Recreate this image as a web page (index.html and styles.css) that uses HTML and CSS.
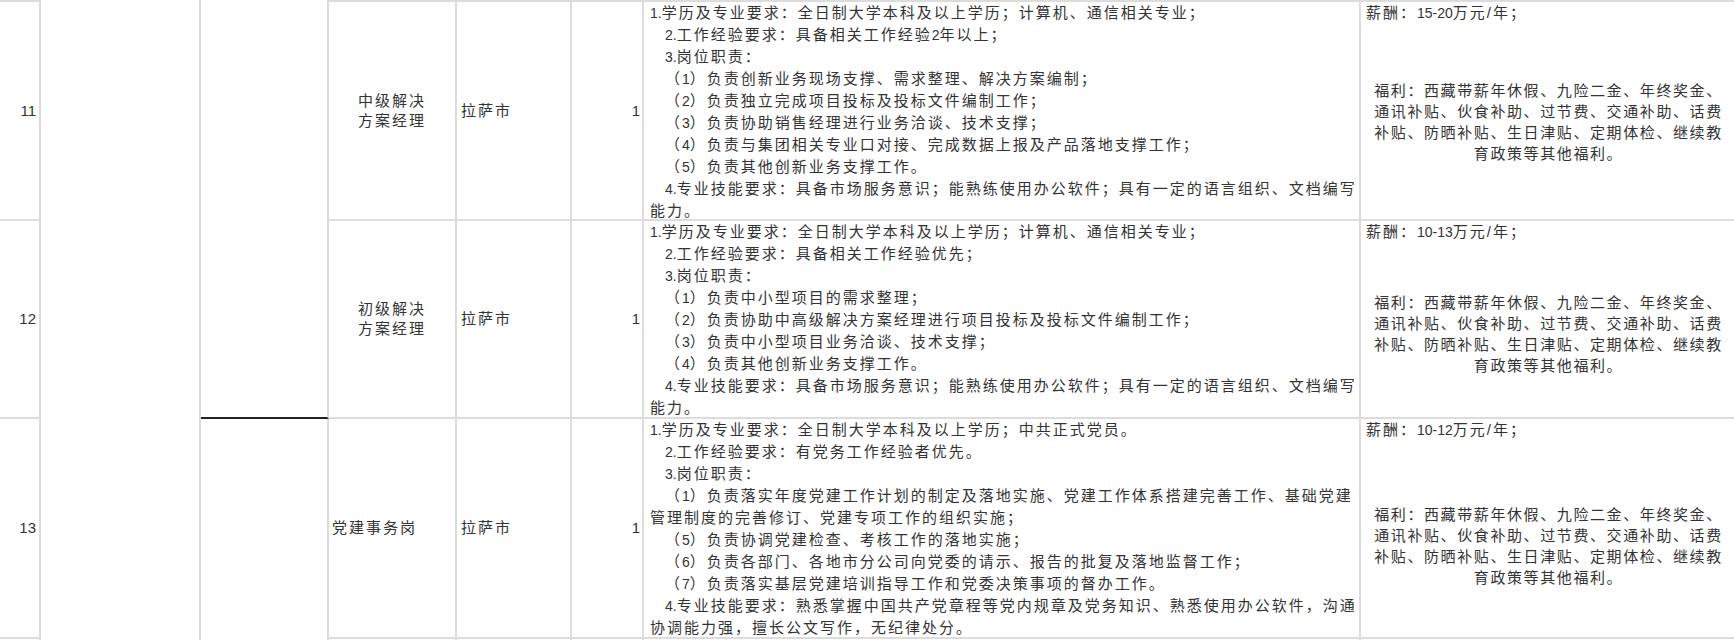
FILE: index.html
```html
<!DOCTYPE html>
<html lang="zh-CN">
<head>
<meta charset="utf-8">
<title>岗位表</title>
<link rel="stylesheet" href="styles.css">
</head>
<body>
<div class="sheet">
  <!-- row 11 -->
  <div class="cell num top">11</div>
  <div class="cell merge-all"></div>
  <div class="cell merge-dept"></div>
  <div class="cell pos top">中级解决<br>方案经理</div>
  <div class="cell city top">拉萨市</div>
  <div class="cell count top">1</div>
  <div class="cell desc top">
    <div class="ln"><span class="d">1.</span>学历及专业要求：全日制大学本科及以上学历；计算机、通信相关专业；</div>
    <div class="ln in"><span class="d">2.</span>工作经验要求：具备相关工作经验<span class="d">2</span>年以上；</div>
    <div class="ln in"><span class="d">3.</span>岗位职责：</div>
    <div class="ln in">（<span class="d">1</span>）负责创新业务现场支撑、需求整理、解决方案编制；</div>
    <div class="ln in">（<span class="d">2</span>）负责独立完成项目投标及投标文件编制工作；</div>
    <div class="ln in">（<span class="d">3</span>）负责协助销售经理进行业务洽谈、技术支撑；</div>
    <div class="ln in">（<span class="d">4</span>）负责与集团相关专业口对接、完成数据上报及产品落地支撑工作；</div>
    <div class="ln in">（<span class="d">5</span>）负责其他创新业务支撑工作。</div>
    <div class="ln in"><span class="d">4.</span>专业技能要求：具备市场服务意识；能熟练使用办公软件；具有一定的语言组织、文档编写</div>
    <div class="ln">能力。</div>
  </div>
  <div class="cell pay top">
    <div class="salary">薪酬：<span class="d">15-20</span>万元/年；</div>
    <div class="welfare w11">福利：西藏带薪年休假、九险二金、年终奖金、<br>通讯补贴、伙食补助、过节费、交通补助、话费<br>补贴、防晒补贴、生日津贴、定期体检、继续教<br>育政策等其他福利。</div>
  </div>

  <!-- row 12 -->
  <div class="cell num">12</div>
  <div class="cell pos">初级解决<br>方案经理</div>
  <div class="cell city">拉萨市</div>
  <div class="cell count">1</div>
  <div class="cell desc">
    <div class="ln"><span class="d">1.</span>学历及专业要求：全日制大学本科及以上学历；计算机、通信相关专业；</div>
    <div class="ln in"><span class="d">2.</span>工作经验要求：具备相关工作经验优先；</div>
    <div class="ln in"><span class="d">3.</span>岗位职责：</div>
    <div class="ln in">（<span class="d">1</span>）负责中小型项目的需求整理；</div>
    <div class="ln in">（<span class="d">2</span>）负责协助中高级解决方案经理进行项目投标及投标文件编制工作；</div>
    <div class="ln in">（<span class="d">3</span>）负责中小型项目业务洽谈、技术支撑；</div>
    <div class="ln in">（<span class="d">4</span>）负责其他创新业务支撑工作。</div>
    <div class="ln in"><span class="d">4.</span>专业技能要求：具备市场服务意识；能熟练使用办公软件；具有一定的语言组织、文档编写</div>
    <div class="ln">能力。</div>
  </div>
  <div class="cell pay">
    <div class="salary">薪酬：<span class="d">10-13</span>万元/年；</div>
    <div class="welfare w12">福利：西藏带薪年休假、九险二金、年终奖金、<br>通讯补贴、伙食补助、过节费、交通补助、话费<br>补贴、防晒补贴、生日津贴、定期体检、继续教<br>育政策等其他福利。</div>
  </div>

  <!-- row 13 -->
  <div class="cell num">13</div>
  <div class="cell merge-dept2"></div>
  <div class="cell pos left">党建事务岗</div>
  <div class="cell city">拉萨市</div>
  <div class="cell count">1</div>
  <div class="cell desc">
    <div class="ln"><span class="d">1.</span>学历及专业要求：全日制大学本科及以上学历；中共正式党员。</div>
    <div class="ln in"><span class="d">2.</span>工作经验要求：有党务工作经验者优先。</div>
    <div class="ln in"><span class="d">3.</span>岗位职责：</div>
    <div class="ln in">（<span class="d">1</span>）负责落实年度党建工作计划的制定及落地实施、党建工作体系搭建完善工作、基础党建</div>
    <div class="ln">管理制度的完善修订、党建专项工作的组织实施；</div>
    <div class="ln in">（<span class="d">5</span>）负责协调党建检查、考核工作的落地实施；</div>
    <div class="ln in">（<span class="d">6</span>）负责各部门、各地市分公司向党委的请示、报告的批复及落地监督工作；</div>
    <div class="ln in">（<span class="d">7</span>）负责落实基层党建培训指导工作和党委决策事项的督办工作。</div>
    <div class="ln in"><span class="d">4.</span>专业技能要求：熟悉掌握中国共产党章程等党内规章及党务知识、熟悉使用办公软件，沟通</div>
    <div class="ln">协调能力强，擅长公文写作，无纪律处分。</div>
  </div>
  <div class="cell pay">
    <div class="salary">薪酬：<span class="d">10-12</span>万元/年；</div>
    <div class="welfare w13">福利：西藏带薪年休假、九险二金、年终奖金、<br>通讯补贴、伙食补助、过节费、交通补助、话费<br>补贴、防晒补贴、生日津贴、定期体检、继续教<br>育政策等其他福利。</div>
  </div>

  <!-- row 14 (only its top edge is visible) -->
  <div class="cell num tail"></div>
  <div class="cell tail"></div>
  <div class="cell tail"></div>
  <div class="cell tail"></div>
  <div class="cell tail"></div>
  <div class="cell tail"></div>
</div>
</body>
</html>
```

FILE: styles.css
```css
html, body {
  margin: 0;
  padding: 0;
  background: #ffffff;
}

body {
  font-family: "Liberation Sans", "Noto Sans CJK SC", sans-serif;
  color: #333333;
  overflow: hidden;
  width: 1734px;
  height: 640px;
}

.sheet {
  display: grid;
  grid-template-columns: 41px 160px 128px 128px 115px 72px 717px 390px;
  grid-template-rows: 221px 198px 220px 1px;
  width: max-content;
}

.cell {
  box-sizing: border-box;
  border-right: 2px solid #dcdcdc;
  border-bottom: 2px solid #dcdcdc;
  font-size: 15px;
  line-height: 22px;
  letter-spacing: 2px;
  background: #ffffff;
}

.top {
  border-top: 2px solid #dcdcdc;
}

.tail {
  border-bottom: none;
}

.merge-all {
  grid-row: span 4;
  border-bottom: none;
}

.merge-dept {
  grid-row: span 2;
  border-bottom: 2px solid #222222;
}

.merge-dept2 {
  grid-row: span 2;
  border-bottom: none;
}

.d {
  font-size: 14px;
  letter-spacing: 0;
}

.num {
  display: flex;
  align-items: center;
  justify-content: flex-end;
  padding-right: 3px;
  letter-spacing: 0;
  font-size: 15px;
}

.pos {
  display: flex;
  align-items: center;
  justify-content: center;
  text-align: center;
  line-height: 20px;
}

.pos.left {
  justify-content: flex-start;
  text-align: left;
  padding-left: 3px;
}

.city {
  display: flex;
  align-items: center;
  padding-left: 4px;
}

.count {
  display: flex;
  align-items: center;
  justify-content: flex-end;
  padding-right: 2px;
  letter-spacing: 0;
}

.desc {
  padding-left: 6px;
  white-space: nowrap;
  overflow: visible;
}

.ln.in {
  padding-left: 15px;
}

.pay {
  padding-left: 5px;
  white-space: nowrap;
}

.welfare {
  text-align: center;
  line-height: 21px;
  letter-spacing: 1.6px;
  padding-right: 18px;
}

.w11 { margin-top: 56px; }
.w12 { margin-top: 49px; }
.w13 { margin-top: 63px; }
```
